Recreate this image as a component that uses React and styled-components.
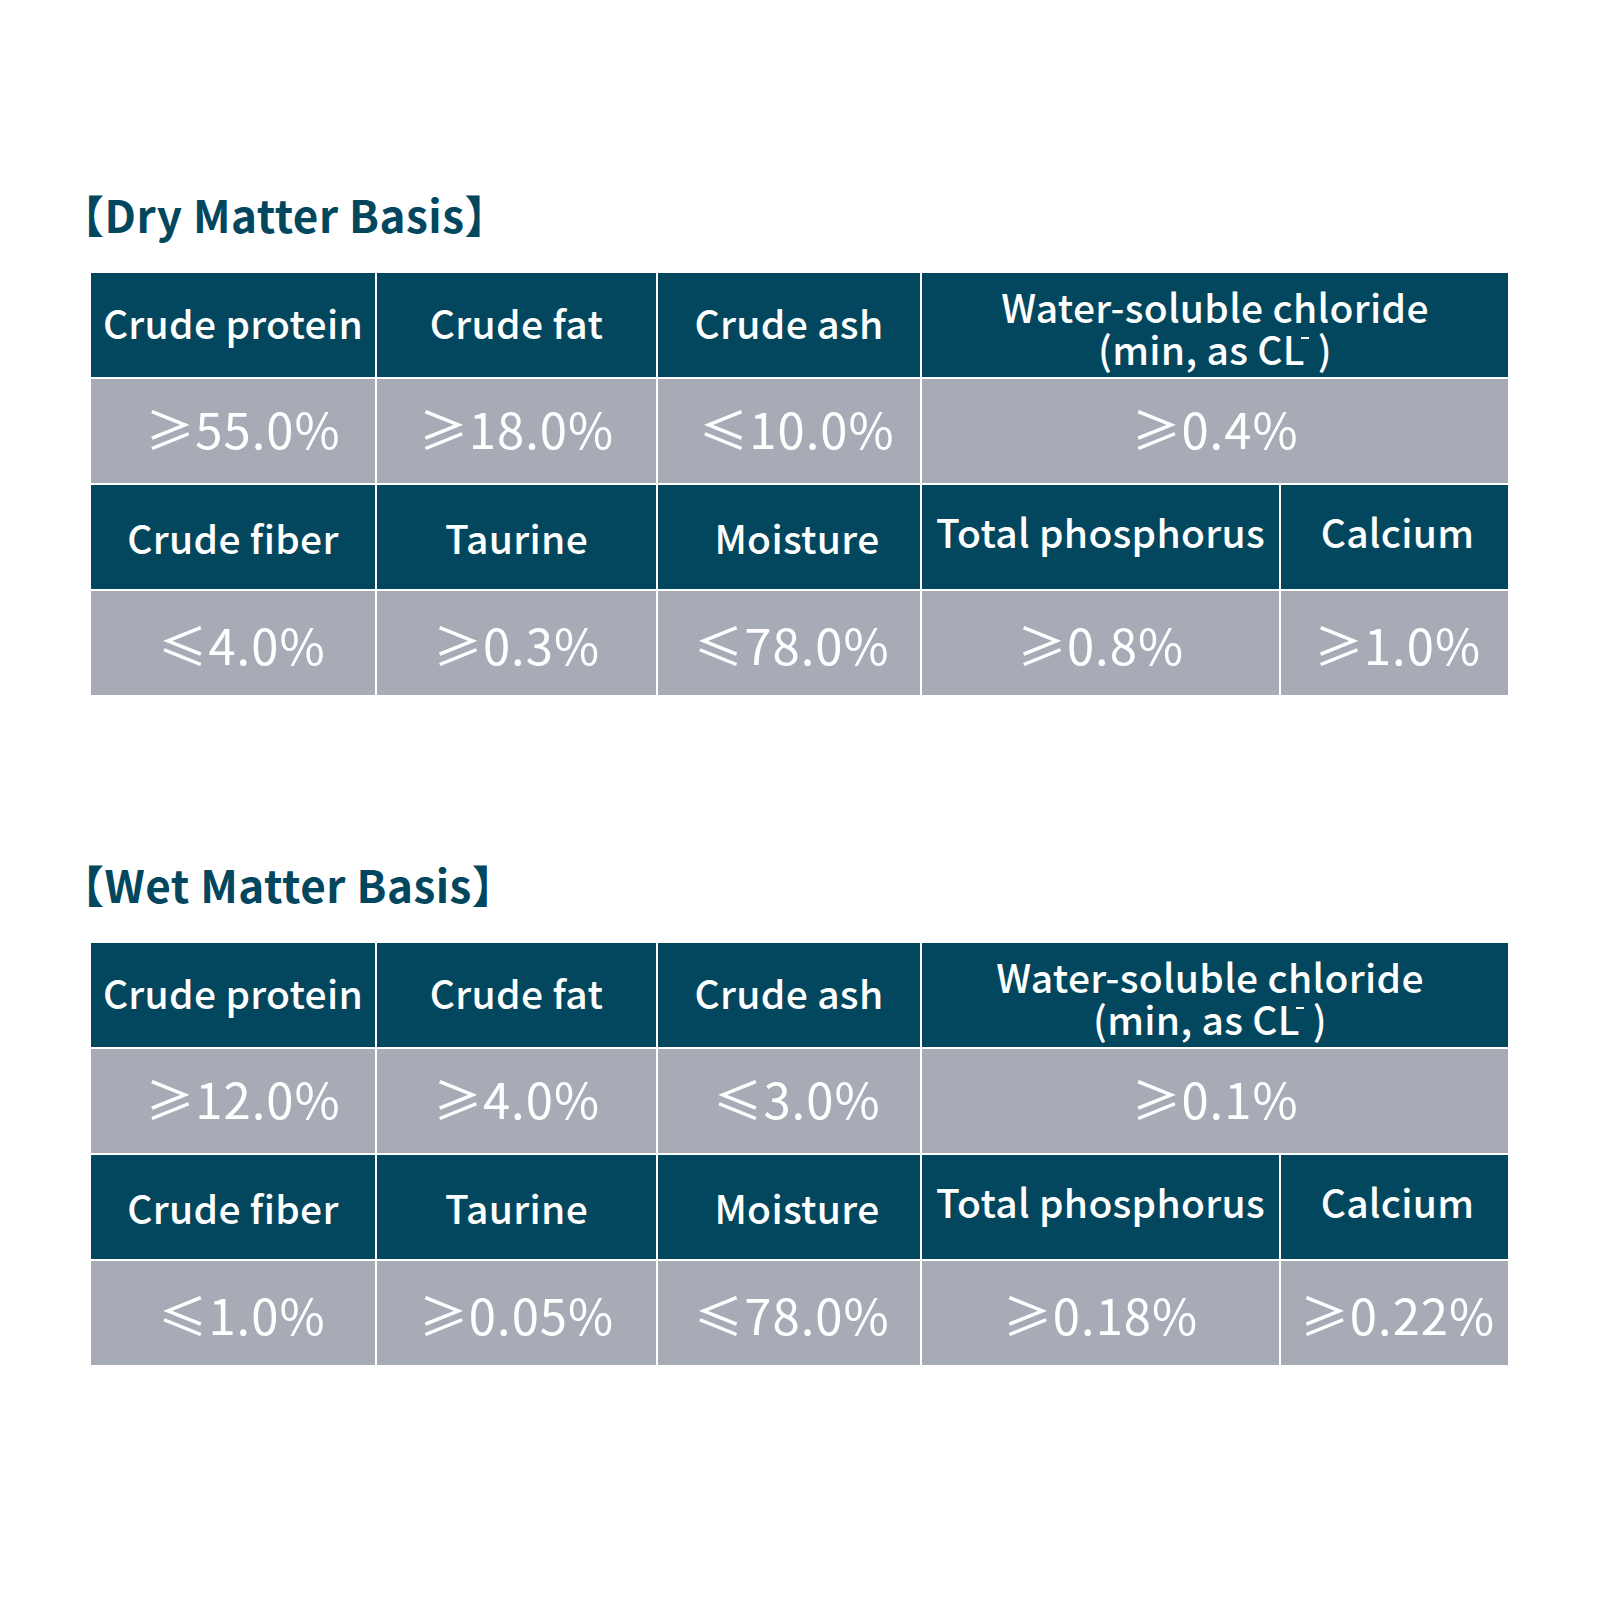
import styled, { createGlobalStyle } from "styled-components";

const GlobalStyle = createGlobalStyle`
  html, body {
    margin: 0;
    padding: 0;
    background: #ffffff;
  }
  body {
    font-family: "Noto Sans CJK SC", "Noto Sans", sans-serif;
  }
`;

const Page = styled.div`
  width: 1600px;
  height: 1600px;
  box-sizing: border-box;
  padding: 188px 0 0 91px;
`;

const Section = styled.section`
  margin-bottom: ${(p) => p.$gap || 0}px;
`;

const Title = styled.h2`
  margin: 0 0 33px -31px;
  font-size: 44px;
  line-height: 52px;
  font-weight: 700;
  letter-spacing: 0.5px;
  color: #02475e;
`;

const Grid = styled.div`
  display: grid;
  grid-template-columns: 284px 279px 262px 357px 227px;
  grid-auto-rows: 104px;
  gap: 2px;
  width: 1417px;
  background: #ffffff;
`;

const Cell = styled.div`
  grid-column: span ${(p) => p.$span || 1};
  display: flex;
  align-items: center;
  justify-content: center;
  flex-direction: column;
  box-sizing: border-box;
  padding-left: ${(p) => Math.max(0, p.$nudge || 0)}px;
  padding-right: ${(p) => Math.max(0, -(p.$nudge || 0))}px;
  padding-top: ${(p) => p.$drop || 0}px;
  padding-bottom: ${(p) => p.$lift || 0}px;
  color: #ffffff;
  text-align: center;
  white-space: nowrap;
`;

const Head = styled(Cell)`
  background: #02475e;
  font-size: 39px;
  font-weight: 500;
  line-height: 42px;
  letter-spacing: 0.3px;
`;

const Value = styled(Cell)`
  background: #a6abb6;
  font-size: 49px;
  font-weight: 400;
  line-height: 1;
  letter-spacing: 1px;
`;

const Minus = styled.span`
  display: inline-block;
  width: 8px;
  height: 28px;
  margin: 0 9px 0 -4px;
  border-top: 2px solid #ffffff;
  box-sizing: border-box;
  vertical-align: baseline;
`;

const Chloride = ({ shift }) => (
  <Head $span={2} $nudge={shift} $drop={4}>
    <span>Water-soluble chloride</span>
    <span>
      (min, as CL<Minus />)
    </span>
  </Head>
);

const tables = [
  {
    title: "【Dry Matter Basis】",
    shift: 0,
    top: ["≥55.0%", "≥18.0%", "≤10.0%", "≥0.4%"],
    bottom: ["≤4.0%", "≥0.3%", "≤78.0%", "≥0.8%", "≥1.0%"],
  },
  {
    title: "【Wet Matter Basis】",
    shift: -10,
    top: ["≥12.0%", "≥4.0%", "≤3.0%", "≥0.1%"],
    bottom: ["≤1.0%", "≥0.05%", "≤78.0%", "≥0.18%", "≥0.22%"],
  },
];

const topNudge = [20, 0, 16, 0];
const bottomNudge = [18, 0, 6, 0, 6];

export default function App() {
  return (
    <>
      <GlobalStyle />
      <Page>
        {tables.map((t, i) => (
          <Section key={t.title} $gap={i === 0 ? 163 : 0}>
            <Title>{t.title}</Title>
            <Grid>
              <Head $lift={6}>Crude protein</Head>
              <Head $lift={6}>Crude fat</Head>
              <Head $lift={6}>Crude ash</Head>
              <Chloride shift={t.shift} />

              {t.top.map((v, j) => (
                <Value key={j} $span={j === 3 ? 2 : 1} $nudge={topNudge[j]} $lift={8}>
                  {v}
                </Value>
              ))}

              <Head>Crude fiber</Head>
              <Head>Taurine</Head>
              <Head $nudge={16}>Moisture</Head>
              <Head $lift={12}>Total phosphorus</Head>
              <Head $nudge={6} $lift={12}>Calcium</Head>

              {t.bottom.map((v, j) => (
                <Value key={j} $nudge={bottomNudge[j]}>
                  {v}
                </Value>
              ))}
            </Grid>
          </Section>
        ))}
      </Page>
    </>
  );
}
